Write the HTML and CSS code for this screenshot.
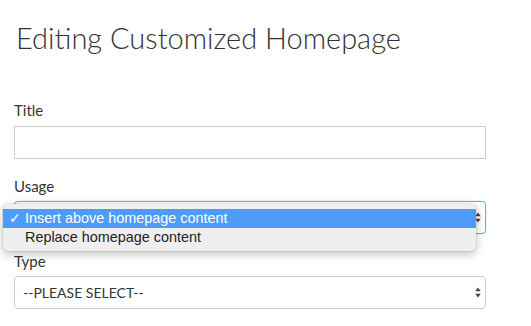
FILE: index.html
```html
<!DOCTYPE html>
<html>
<head>
<meta charset="utf-8">
<link rel="stylesheet" href="styles.css">
</head>
<body>
<div class="page">
  <h1 class="heading">Editing Customized Homepage</h1>
  <div class="field field-title">
    <label class="label">Title</label>
    <div class="input"></div>
  </div>
  <div class="field field-usage">
    <label class="label">Usage</label>
    <div class="select select-focus">
      <span class="select-text"></span>
      <svg class="arrows" width="6" height="11" viewBox="0 0 6 11"><path d="M3 0.5 L5.8 4.2 L0.2 4.2 Z M3 10.5 L5.8 6.8 L0.2 6.8 Z" fill="#444"/></svg>
    </div>
    <div class="menu">
      <div class="opt opt-active"><span class="check">✓</span>Insert above homepage content</div>
      <div class="opt"><span class="check"></span>Replace homepage content</div>
    </div>
  </div>
  <div class="field field-type">
    <label class="label">Type</label>
    <div class="select">
      <span class="select-text">--PLEASE SELECT--</span>
      <svg class="arrows" width="6" height="11" viewBox="0 0 6 11"><path d="M3 0.5 L5.8 4.2 L0.2 4.2 Z M3 10.5 L5.8 6.8 L0.2 6.8 Z" fill="#444"/></svg>
    </div>
  </div>
</div>
</body>
</html>
```
FILE: styles.css
```css
html, body { margin: 0; padding: 0; background: #fff; }
body { font-family: Lato, "Liberation Sans", sans-serif; color: #333; width: 531px; height: 326px; overflow: hidden; }
.page { padding: 0 45px 0 14px; }
.heading { margin: 0; padding-top: 21px; padding-left: 2px; font-weight: 300; font-size: 29px; line-height: 34px; color: #333; }
.field { position: relative; }
.label { display: block; font-size: 15px; line-height: 18px; font-weight: 400; color: #333; }
.field-title { margin-top: 46px; }
.field-title .label { margin-bottom: 7px; }
.input { height: 31px; border: 1px solid #ccc; background: #fff; }
.field-usage { margin-top: 18px; }
.field-usage .label { margin-bottom: 6px; }
.field-type { margin-top: 18px; }
.field-type .label { margin-bottom: 6px; }
.select { height: 31px; border: 1px solid #ccc; border-radius: 4px; background: #fff; display: flex; align-items: center; padding: 0 4px 0 8px; }
.select-focus { border-color: #66afe9; box-shadow: 0 0 2px rgba(102,175,233,0.4); }
.select-text { flex: 1; font-size: 14px; color: #333; }
.arrows { display: block; }
.menu { position: absolute; left: -11px; top: 27px; width: 473px; height: 47px; background: #efefef; border-radius: 5px; box-shadow: 0 3px 10px rgba(0,0,0,0.25), 0 0 0 0.5px rgba(0,0,0,0.12); padding-top: 5px; box-sizing: border-box; font-family: "Liberation Sans", Arial, sans-serif; font-size: 14.4px; }
.opt { height: 19px; line-height: 19px; color: #222; display: flex; }
.opt-active { background: #4e9cf7; color: #fff; }
.check { width: 22px; padding-left: 6px; box-sizing: border-box; }
```
